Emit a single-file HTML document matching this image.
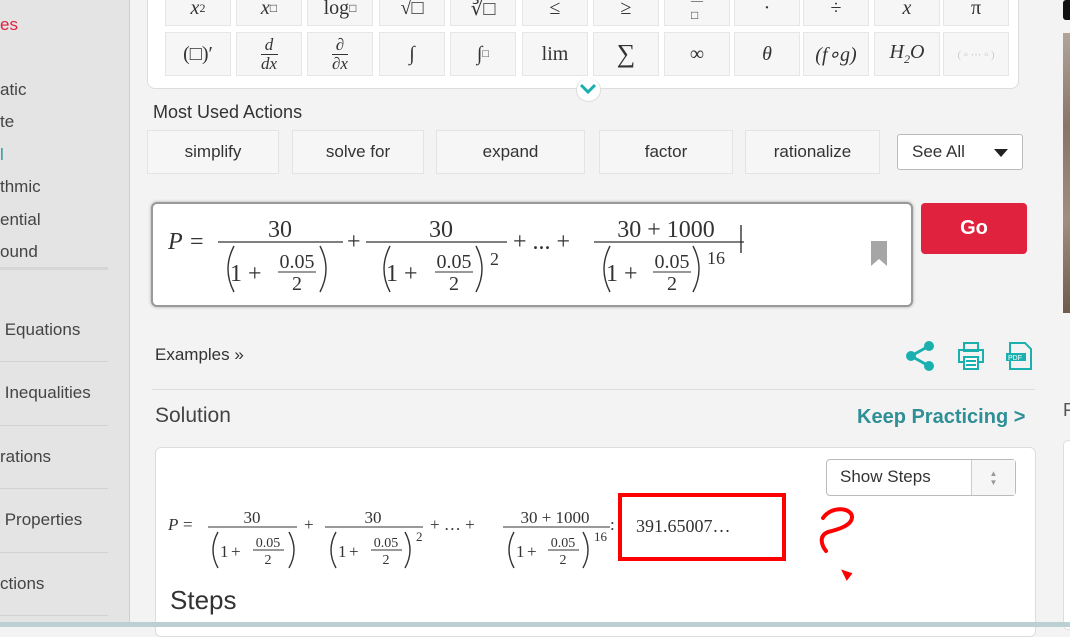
<!DOCTYPE html>
<html><head><meta charset="utf-8"><style>
*{margin:0;padding:0;box-sizing:border-box}
body{width:1070px;height:627px;overflow:hidden;background:#f4f3f3;font-family:"Liberation Sans",sans-serif;position:relative;color:#333}
.a{position:absolute;white-space:nowrap}
.side{position:absolute;left:0;top:0;width:130px;height:627px;background:#e4e4e4;border-right:1px solid #cfcfcf}
.st{position:absolute;left:0;font-size:17px;color:#444}
.sl{position:absolute;left:0;width:108px;height:1px;background:#d2d2d2}
.panel{position:absolute;left:147px;top:-20px;width:872px;height:109px;background:#fff;border:1px solid #ddd;border-radius:8px}
.k{position:absolute;width:66px;background:#f6f6f6;border:1px solid #e6e6e6;font-family:"Liberation Serif",serif;font-size:20px;color:#333;display:flex;align-items:center;justify-content:center}
.btn{position:absolute;top:130px;height:44px;background:#f6f6f6;border:1px solid #e3e3e3;font-size:17px;color:#333;display:flex;align-items:center;justify-content:center}
svg text{font-family:"Liberation Serif",serif;fill:#333}
.p{fill:none;stroke:#333;stroke-width:1.4}
</style></head><body>
<div class="side">
<div class="st" style="top:15px;color:#e0223f">es</div>
<div class="st" style="top:80px">atic</div>
<div class="st" style="top:112px">te</div>
<div class="st" style="top:145px;color:#2e9aa0">l</div>
<div class="st" style="top:177px">thmic</div>
<div class="st" style="top:210px">ential</div>
<div class="st" style="top:242px">ound</div>
<div class="sl" style="top:267px;height:3px;background:#d6d6d6"></div>
<div class="st" style="top:320px">&nbsp;Equations</div>
<div class="sl" style="top:361px"></div>
<div class="st" style="top:383px">&nbsp;Inequalities</div>
<div class="sl" style="top:425px"></div>
<div class="st" style="top:447px">rations</div>
<div class="sl" style="top:488px"></div>
<div class="st" style="top:510px">&nbsp;Properties</div>
<div class="sl" style="top:552px"></div>
<div class="st" style="top:574px">ctions</div>
<div class="sl" style="top:615px"></div>
</div>

<div class="panel"></div>
<div class="k" style="left:165px;top:-10px;height:36px"><i>x</i><sup style="font-size:12px">2</sup></div>
<div class="k" style="left:236px;top:-10px;height:36px"><i>x</i><sup style="font-size:12px">□</sup></div>
<div class="k" style="left:307px;top:-10px;height:36px">log<sub style="font-size:12px">□</sub></div>
<div class="k" style="left:379px;top:-10px;height:36px">√□</div>
<div class="k" style="left:450px;top:-10px;height:36px">∛□</div>
<div class="k" style="left:522px;top:-10px;height:36px">≤</div>
<div class="k" style="left:593px;top:-10px;height:36px">≥</div>
<div class="k" style="left:664px;top:-10px;height:36px;font-size:12px">—<br>□</div>
<div class="k" style="left:734px;top:-10px;height:36px">·</div>
<div class="k" style="left:803px;top:-10px;height:36px">÷</div>
<div class="k" style="left:874px;top:-10px;height:36px"><i>x</i></div>
<div class="k" style="left:943px;top:-10px;height:36px">π</div>
<div class="k" style="left:165px;top:32px;height:44px">(□)′</div>
<div class="k" style="left:236px;top:32px;height:44px;flex-direction:column;font-size:17px;line-height:18px"><i style="border-bottom:1px solid #333">&nbsp;d&nbsp;</i><i>dx</i></div>
<div class="k" style="left:307px;top:32px;height:44px;flex-direction:column;font-size:17px;line-height:18px"><span style="border-bottom:1px solid #333">&nbsp;∂&nbsp;</span><i>∂x</i></div>
<div class="k" style="left:379px;top:32px;height:44px">∫</div>
<div class="k" style="left:450px;top:32px;height:44px">∫<sup style="font-size:11px">□</sup></div>
<div class="k" style="left:522px;top:32px;height:44px">lim</div>
<div class="k" style="left:593px;top:32px;height:44px;font-size:26px">∑</div>
<div class="k" style="left:664px;top:32px;height:44px">∞</div>
<div class="k" style="left:734px;top:32px;height:44px"><i>θ</i></div>
<div class="k" style="left:803px;top:32px;height:44px"><i>(f∘g)</i></div>
<div class="k" style="left:874px;top:32px;height:44px"><i>H<sub style="font-size:12px">2</sub>O</i></div>
<div class="k" style="left:943px;top:32px;height:44px;color:#ccc;font-size:11px">( ▫ ⋯ ▫ )</div>
<div class="a" style="left:576px;top:78px;width:25px;height:24px;background:#fff;border-radius:50%;border:1px solid #ddd;border-top:none"></div>
<svg class="a" style="left:578px;top:82px" width="20" height="14"><path d="M3 3 L10 10 L17 3" stroke="#1ab0b0" stroke-width="3" fill="none"/></svg>

<div class="a" style="left:153px;top:102px;font-size:18px;color:#333">Most Used Actions</div>
<div class="btn" style="left:147px;width:132px">simplify</div>
<div class="btn" style="left:292px;width:132px">solve for</div>
<div class="btn" style="left:436px;width:149px">expand</div>
<div class="btn" style="left:599px;width:134px">factor</div>
<div class="btn" style="left:745px;width:135px">rationalize</div>
<div class="btn" style="left:897px;top:134px;height:36px;width:126px;background:#fff;border:1px solid #bbb;border-radius:3px;justify-content:flex-start;padding-left:14px">See All<svg style="position:absolute;right:14px;top:14px" width="14" height="8"><path d="M0 0H14L7 8Z" fill="#222"/></svg></div>

<div class="a" style="left:151px;top:202px;width:762px;height:105px;background:#fff;border:2px solid #999;border-radius:6px;box-shadow:0 0 3px #aaa"></div>
<svg class="a" style="left:0;top:0" width="1070" height="627">
<g font-size="24">
<text x="168" y="249" font-style="italic">P</text><text x="190" y="249">=</text>
<line x1="218" y1="242" x2="343" y2="242" stroke="#333" stroke-width="1.3"/>
<text x="280" y="237" text-anchor="middle">30</text>
<path class="p" d="M234 246Q222 269 234 292"/><text x="230" y="281">1</text><text x="248" y="281">+</text>
<text x="297" y="268" text-anchor="middle" font-size="20">0.05</text><line x1="278" y1="272" x2="316" y2="272" stroke="#333"/><text x="297" y="290" text-anchor="middle" font-size="20">2</text>
<path class="p" d="M320 246Q332 269 320 292"/>
<text x="347" y="249">+</text>
<line x1="366" y1="242" x2="507" y2="242" stroke="#333" stroke-width="1.3"/>
<text x="441" y="237" text-anchor="middle">30</text>
<path class="p" d="M390 246Q378 269 390 292"/><text x="386" y="281">1</text><text x="404" y="281">+</text>
<text x="454" y="268" text-anchor="middle" font-size="20">0.05</text><line x1="435" y1="272" x2="473" y2="272" stroke="#333"/><text x="454" y="290" text-anchor="middle" font-size="20">2</text>
<path class="p" d="M476 246Q488 269 476 292"/><text x="490" y="265" font-size="18">2</text>
<text x="513" y="249">+ ... +</text>
<line x1="594" y1="242" x2="744" y2="242" stroke="#333" stroke-width="1.3"/>
<text x="666" y="237" text-anchor="middle">30 + 1000</text>
<path class="p" d="M610 246Q598 269 610 292"/><text x="606" y="281">1</text><text x="624" y="281">+</text>
<text x="672" y="268" text-anchor="middle" font-size="20">0.05</text><line x1="653" y1="272" x2="691" y2="272" stroke="#333"/><text x="672" y="290" text-anchor="middle" font-size="20">2</text>
<path class="p" d="M693 246Q705 269 693 292"/><text x="707" y="264" font-size="18">16</text>
<line x1="741" y1="225" x2="741" y2="253" stroke="#222" stroke-width="1.3"/>
</g>
<path d="M871 241H887V266L879 259L871 266Z" fill="#a6a6a6"/>
</svg>
<div class="a" style="left:921px;top:203px;width:106px;height:51px;background:#e0223f;border-radius:4px;color:#fff;font-weight:bold;font-size:20px;display:flex;align-items:center;justify-content:center">Go</div>

<div class="a" style="left:155px;top:345px;font-size:17px;color:#333">Examples »</div>
<svg class="a" style="left:905px;top:340px" width="135" height="32">
<g fill="#1ab0b0"><circle cx="6" cy="16" r="5"/><circle cx="24" cy="6" r="5"/><circle cx="24" cy="26" r="5"/></g>
<path d="M6 16L24 6M6 16L24 26" stroke="#1ab0b0" stroke-width="3"/>
<g fill="none" stroke="#1ab0b0" stroke-width="2"><rect x="59" y="3" width="14" height="8"/><rect x="54" y="10" width="24" height="12"/><rect x="59" y="17" width="14" height="12" fill="#fff"/></g>
<path d="M61 21H71M61 25H71" stroke="#1ab0b0" stroke-width="2"/>
<path d="M105 3H120L126 9V29H105Z" fill="none" stroke="#1ab0b0" stroke-width="2"/>
<rect x="101" y="13" width="20" height="8" fill="#1ab0b0"/>
<text x="103" y="20" font-size="7" style="fill:#fff;font-family:'Liberation Sans'">PDF</text>
</svg>
<div class="a" style="left:152px;top:389px;width:883px;height:1px;background:#ddd"></div>
<div class="a" style="left:155px;top:404px;font-size:21px;color:#444">Solution</div>
<div class="a" style="left:857px;top:406px;font-size:20px;color:#2e8f96;font-weight:bold">Keep Practicing &gt;</div>

<div class="a" style="left:155px;top:447px;width:881px;height:190px;background:#fff;border:1px solid #ddd;border-radius:6px"></div>
<div class="a" style="left:826px;top:459px;width:190px;height:37px;border:1px solid #bbb;border-radius:4px;background:#fff;font-size:17px;color:#333;padding:7px 0 0 13px">Show Steps<div style="position:absolute;right:0;top:0;width:44px;height:35px;border-left:1px solid #ccc;background:#f6f6f6;color:#999;font-size:8px;text-align:center;line-height:9px;padding-top:9px">▲<br>▼</div></div>
<svg class="a" style="left:0;top:0" width="1070" height="627">
<g font-size="17">
<text x="168" y="530" font-style="italic">P</text><text x="183" y="530">=</text>
<line x1="208" y1="527" x2="297" y2="527" stroke="#333"/>
<text x="252" y="523" text-anchor="middle">30</text>
<path class="p" d="M218 532Q208 550 218 568"/><text x="220" y="557">1</text><text x="231" y="557">+</text>
<text x="268" y="547" text-anchor="middle" font-size="14">0.05</text><line x1="253" y1="550" x2="284" y2="550" stroke="#333"/><text x="268" y="564" text-anchor="middle" font-size="14">2</text>
<path class="p" d="M289 532Q299 550 289 568"/>
<text x="304" y="530">+</text>
<line x1="325" y1="527" x2="423" y2="527" stroke="#333"/>
<text x="373" y="523" text-anchor="middle">30</text>
<path class="p" d="M336 532Q326 550 336 568"/><text x="338" y="557">1</text><text x="349" y="557">+</text>
<text x="386" y="547" text-anchor="middle" font-size="14">0.05</text><line x1="371" y1="550" x2="402" y2="550" stroke="#333"/><text x="386" y="564" text-anchor="middle" font-size="14">2</text>
<path class="p" d="M405 532Q415 550 405 568"/><text x="416" y="541" font-size="13">2</text>
<text x="430" y="530">+ … +</text>
<line x1="503" y1="527" x2="610" y2="527" stroke="#333"/>
<text x="555" y="523" text-anchor="middle">30 + 1000</text>
<path class="p" d="M514 532Q504 550 514 568"/><text x="516" y="557">1</text><text x="527" y="557">+</text>
<text x="563" y="547" text-anchor="middle" font-size="14">0.05</text><line x1="548" y1="550" x2="579" y2="550" stroke="#333"/><text x="563" y="564" text-anchor="middle" font-size="14">2</text>
<path class="p" d="M583 532Q593 550 583 568"/><text x="594" y="541" font-size="13">16</text>
<text x="610" y="530">:</text>
<text x="636" y="532" font-size="18">391.65007…</text>
</g>
<rect x="620" y="495" width="164" height="64" fill="none" stroke="#f00" stroke-width="4"/>
<path d="M823 518C832 505 852 508 852 517C852 526 836 530 828 532C818 536 822 546 826 551" fill="none" stroke="#f00" stroke-width="4" stroke-linecap="round"/>
<path d="M844 572L850 574L847 578Z" fill="#f00" stroke="#f00" stroke-width="3"/>
</svg>
<div class="a" style="left:170px;top:585px;font-size:26px;color:#333">Steps</div>

<div class="a" style="left:1063px;top:0;width:7px;height:20px;background:#111;border-radius:3px 0 0 3px"></div>
<div class="a" style="left:1063px;top:33px;width:7px;height:280px;background:linear-gradient(#b0a49a,#8a7466,#a38d7f,#6f5a4c)"></div>
<div class="a" style="left:1063px;top:400px;font-size:18px;color:#555">F</div>
<div class="a" style="left:1063px;top:440px;width:10px;height:190px;background:#fff;border:1px solid #ddd;border-radius:5px"></div>
<div class="a" style="left:0;top:622px;width:1070px;height:5px;background:#bcd0d4"></div>
</body></html>
